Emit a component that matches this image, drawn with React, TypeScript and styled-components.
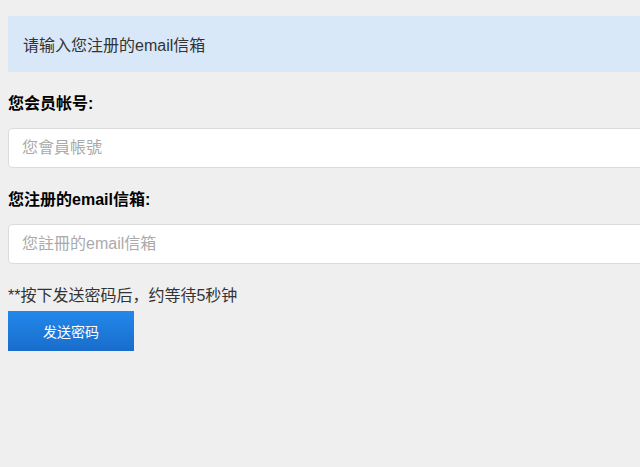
import React from "react";
import styled, { createGlobalStyle } from "styled-components";

const Global = createGlobalStyle`
  html, body {
    margin: 0;
    padding: 0;
    background: #efefef;
    overflow: hidden;
  }
  body {
    font-family: "Liberation Sans", "Noto Sans CJK SC", sans-serif;
    color: #333;
  }
`;

const Page = styled.div`
  width: 720px;
  padding: 16px 8px;
`;

const Alert = styled.div`
  height: 56px;
  display: flex;
  align-items: center;
  padding: 0 15px;
  background-color: #d9e8f9;
  font-size: 16px;
  color: #333;
`;

const Field = styled.div`
  margin-top: 22px;
`;

const Label = styled.label`
  display: block;
  font-size: 16px;
  font-weight: bold;
  color: #000;
  line-height: 20px;
  margin-bottom: 14px;
`;

const Input = styled.input`
  box-sizing: border-box;
  display: block;
  width: 100%;
  height: 40px;
  padding: 0 13px;
  border: 1px solid #dcdcdc;
  border-radius: 4px;
  background: #fff;
  font-family: inherit;
  font-size: 16px;
  color: #333;
  outline: none;

  &::placeholder {
    color: #aaa;
  }
`;

const Note = styled.p`
  margin: 22px 0 0;
  font-size: 16px;
  line-height: 20px;
  color: #333;
`;

const SendButton = styled.button`
  display: block;
  margin-top: 5px;
  width: 126px;
  height: 40px;
  border: none;
  border-radius: 0;
  background: linear-gradient(to bottom, #2288ea, #196dcc);
  color: #fff;
  font-family: inherit;
  font-size: 14px;
  cursor: pointer;
`;

export default function App() {
  return (
    <Page>
      <Global />
      <Alert>请输入您注册的email信箱</Alert>
      <Field>
        <Label htmlFor="account">您会员帐号:</Label>
        <Input id="account" placeholder="您會員帳號" />
      </Field>
      <Field>
        <Label htmlFor="email">您注册的email信箱:</Label>
        <Input id="email" placeholder="您註冊的email信箱" />
      </Field>
      <Note>**按下发送密码后，约等待5秒钟</Note>
      <SendButton>发送密码</SendButton>
    </Page>
  );
}
